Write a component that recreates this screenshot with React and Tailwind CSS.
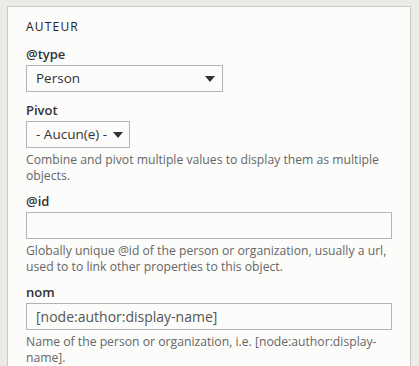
import { useState } from 'react'

function Caret() {
  return (
    <svg width="10" height="6" viewBox="0 0 10 6" className="shrink-0">
      <path d="M0 0h10L5 6z" fill="#333" />
    </svg>
  )
}

function Select({ value, className }) {
  return (
    <div
      className={`flex h-[27px] items-center justify-between gap-[6px] border border-[#b4b4b4] bg-[#fcfcfa] pl-[9px] pr-[7px] text-[13.5px] text-[#333] ${className}`}
    >
      <span className="whitespace-nowrap">{value}</span>
      <Caret />
    </div>
  )
}

function Label({ children }) {
  return <div className="mb-[2px] text-[13px] leading-[18px] font-semibold text-[#333]">{children}</div>
}

function Description({ children }) {
  return <div className="mt-[4px] text-[12.2px] leading-[16px] text-[#666]">{children}</div>
}

export default function App() {
  const [id, setId] = useState('')
  const [nom, setNom] = useState('[node:author:display-name]')

  return (
    <div className="min-h-[366px] bg-[#ecebe8] pt-[6px] pl-[7px] pr-[8px] font-['Open_Sans',sans-serif]">
      <div className="h-[360px] overflow-hidden border border-b-0 border-[#c8c8c8] bg-[#fcfcfa] px-[18px] pt-[11px]">
        <div className="text-[12px] leading-[18px] font-medium tracking-[0.1em] text-[#222]">AUTEUR</div>

        <div className="mt-[9px]">
          <Label>@type</Label>
          <Select value="Person" className="w-[197px]" />
        </div>

        <div className="mt-[9px]">
          <Label>Pivot</Label>
          <Select value="- Aucun(e) -" className="w-[104px]" />
          <Description>Combine and pivot multiple values to display them as multiple objects.</Description>
        </div>

        <div className="mt-[8px]">
          <Label>@id</Label>
          <input
            value={id}
            onChange={(e) => setId(e.target.value)}
            className="block h-[27px] w-full border border-[#b4b4b4] bg-[#fcfcfa] px-[9px] text-[14px] text-[#555] outline-none"
          />
          <Description>
            Globally unique @id of the person or organization, usually a url, used to to link other properties to this object.
          </Description>
        </div>

        <div className="mt-[8px]">
          <Label>nom</Label>
          <input
            value={nom}
            onChange={(e) => setNom(e.target.value)}
            className="block h-[27px] w-full border border-[#b4b4b4] bg-[#fcfcfa] px-[9px] text-[14px] text-[#555] outline-none"
          />
          <Description>Name of the person or organization, i.e. [node:author:display-name].</Description>
        </div>
      </div>
    </div>
  )
}
